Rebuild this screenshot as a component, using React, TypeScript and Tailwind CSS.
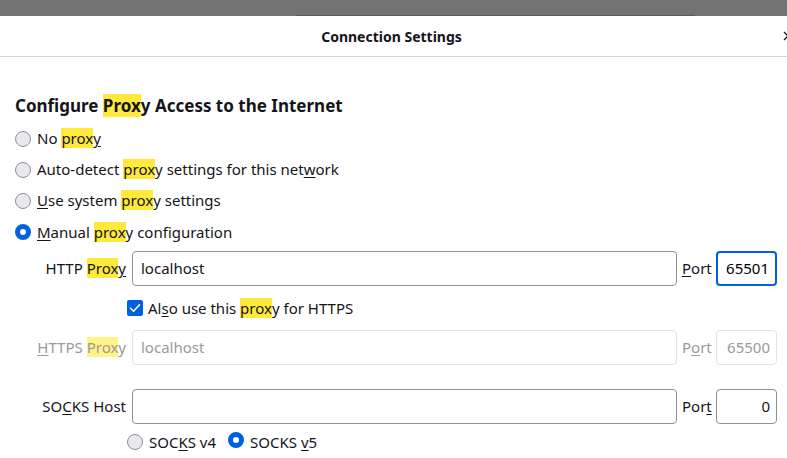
import type { ReactNode } from "react";

const font = { fontFamily: '"Noto Sans", "Open Sans", sans-serif' };

// search-style highlight used on every "prox" in the dialog
const Hl = ({ children, dim }: { children: ReactNode; dim?: boolean }) => (
  <span className={dim ? "bg-[#fff38a]" : "bg-[#ffe93b]"}>{children}</span>
);

const U = ({ children }: { children: ReactNode }) => <span className="underline underline-offset-2">{children}</span>;

const Radio = ({ checked }: { checked?: boolean }) =>
  checked ? (
    <span className="inline-block w-4 h-4 rounded-full border-[5px] border-[#0061e0] bg-white shrink-0" />
  ) : (
    <span className="inline-block w-4 h-4 rounded-full border border-[#8f8f9d] bg-[#e9e9ed] shrink-0" />
  );

const Checkbox = () => (
  <span className="inline-flex items-center justify-center w-4 h-4 rounded-[2px] bg-[#0061e0] shrink-0">
    <svg width="12" height="12" viewBox="0 0 12 12" fill="none">
      <path d="M1.5 6.2 4.6 9.2 10.5 2.8" stroke="white" strokeWidth="1.5" strokeLinecap="round" strokeLinejoin="round" />
    </svg>
  </span>
);

const RadioRow = ({ checked, children }: { checked?: boolean; children: ReactNode }) => (
  <div className="flex items-center gap-[6px] h-[31px]">
    <Radio checked={checked} />
    <span>{children}</span>
  </div>
);

const ProxyRow = ({
  label,
  value,
  port,
  portLabel,
  disabled,
  focused,
}: {
  label: ReactNode;
  value: string;
  port: string;
  portLabel: ReactNode;
  disabled?: boolean;
  focused?: boolean;
}) => (
  <div className={"flex items-center h-[35px] " + (disabled ? "text-[#9a9a9a]" : "text-[#15141a]")}>
    <div className="w-[117px] text-right pr-[6px] whitespace-nowrap">{label}</div>
    <div
      className={
        "flex-1 h-full flex items-center px-[8px] rounded-[4px] border " +
        (disabled ? "border-[#e3e3e3]" : "border-[#8f8f9d]")
      }
    >
      <span>{value}</span>
    </div>
    <div className="w-[39px] pl-[5px] whitespace-nowrap">{portLabel}</div>
    <div
      className={
        "w-[61px] h-full flex items-center justify-end px-[6px] rounded-[4px] " +
        (focused
          ? "border-2 border-[#0061e0] text-black"
          : disabled
          ? "border border-[#e3e3e3] text-[#9a9a9a]"
          : "border border-[#8f8f9d]")
      }
    >
      {port}
    </div>
  </div>
);

export default function App() {
  return (
    <div className="w-[787px] h-[458px] overflow-hidden bg-white text-[15px] text-[#15141a]" style={font}>
      <div className="h-[16px] bg-[#737373] flex items-end">
        <div className="ml-[296px] w-[399px] h-px bg-[#5a5a5a]" />
      </div>
      <div className="relative h-[41px] flex items-center justify-center border-b border-[#d6d6d6]">
        <span className="font-bold text-[14px] -ml-[4px]">Connection Settings</span>
        <svg className="absolute right-[-6px] top-[15px]" width="10" height="10" viewBox="0 0 10 10">
          <path d="M1 1 9 9M9 1 1 9" stroke="#15141a" strokeWidth="1.3" />
        </svg>
      </div>

      <div className="pl-[15px] pr-[10px] pt-[37px]">
        <h1 className="font-bold text-[17px] leading-[24px] mb-[5px]">
          Configure <Hl>Prox</Hl>y Access to the Internet
        </h1>

        <RadioRow>
          No <Hl>prox</Hl>
          <U>y</U>
        </RadioRow>
        <RadioRow>
          Auto-detect <Hl>prox</Hl>y settings for this net<U>w</U>ork
        </RadioRow>
        <RadioRow>
          <U>U</U>se system <Hl>prox</Hl>y settings
        </RadioRow>
        <div className="h-[32px] flex items-center gap-[6px]">
          <Radio checked />
          <span>
            <U>M</U>anual <Hl>prox</Hl>y configuration
          </span>
        </div>

        <div className="mt-[3px]">
          <ProxyRow
            label={
              <>
                HTTP <Hl>Prox</Hl>
                <U>y</U>
              </>
            }
            value="localhost"
            portLabel={
              <>
                <U>P</U>ort
              </>
            }
            port="65501"
            focused
          />

          <div className="flex items-center gap-[5px] h-[44px] pl-[112px]">
            <Checkbox />
            <span>
              Al<U>s</U>o use this <Hl>prox</Hl>y for HTTPS
            </span>
          </div>

          <ProxyRow
            label={
              <>
                <U>H</U>TTPS <Hl dim>Prox</Hl>y
              </>
            }
            value="localhost"
            portLabel={
              <>
                P<U>o</U>rt
              </>
            }
            port="65500"
            disabled
          />

          <div className="h-[24px]" />

          <ProxyRow
            label={
              <>
                SO<U>C</U>KS Host
              </>
            }
            value=""
            portLabel={
              <>
                Por<U>t</U>
              </>
            }
            port="0"
          />

          <div className="flex items-center h-[36px] pl-[112px]">
            <Radio />
            <span className="ml-[6px]">
              SOC<U>K</U>S v4
            </span>
            <span className="ml-[12px]">
              <Radio checked />
            </span>
            <span className="ml-[6px]">
              SOCKS <U>v</U>5
            </span>
          </div>
        </div>
      </div>
    </div>
  );
}
